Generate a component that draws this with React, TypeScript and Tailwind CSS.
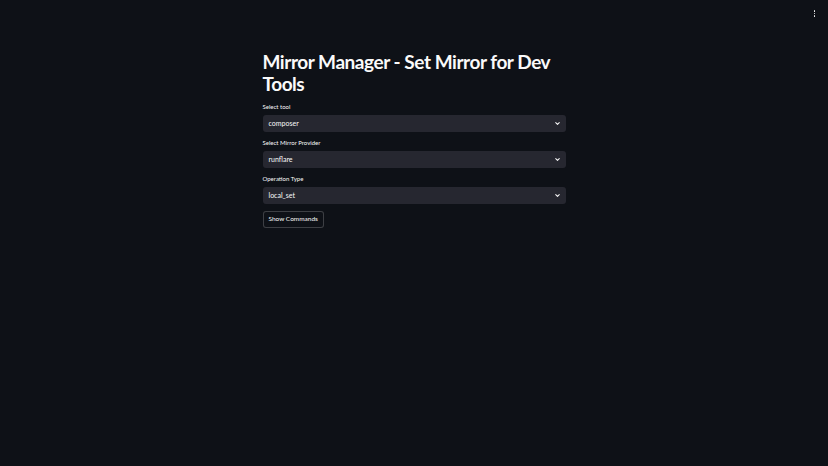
import { ChevronDown } from "lucide-react";

const fields = [
  { label: "Select tool", value: "composer" },
  { label: "Select Mirror Provider", value: "runflare" },
  { label: "Operation Type", value: "local_set" },
];

function Select({ label, value }: { label: string; value: string }) {
  return (
    <div className="flex flex-col gap-[4px]">
      <label className="text-[6px] leading-[8px] text-[#fafafa]">{label}</label>
      <div className="flex h-[17px] items-center justify-between rounded-[3px] bg-[#262730] pl-[6px] pr-[5px]">
        <span className="text-[7px] leading-none text-[#fafafa]">{value}</span>
        <ChevronDown className="h-[7px] w-[7px] text-[#fafafa]" strokeWidth={3.5} />
      </div>
    </div>
  );
}

export default function App() {
  return (
    <div className="relative min-h-screen bg-[#0e1117] font-['Lato',sans-serif] text-[#fafafa]">
      <div className="absolute right-[13px] top-[10px] flex flex-col gap-[1px]">
        <span className="h-[1.5px] w-[1.5px] rounded-full bg-[#fafafa]" />
        <span className="h-[1.5px] w-[1.5px] rounded-full bg-[#fafafa]" />
        <span className="h-[1.5px] w-[1.5px] rounded-full bg-[#fafafa]" />
      </div>

      <main className="mx-auto w-[303px] pt-[51px]">
        <h1 className="text-[19px] font-bold leading-[22px] tracking-[-0.45px]">
          Mirror Manager - Set Mirror for Dev Tools
        </h1>

        <div className="mt-[8px] flex flex-col gap-[7px]">
          {fields.map((f) => (
            <Select key={f.label} label={f.label} value={f.value} />
          ))}
          <div className="flex">
            <button className="h-[17px] rounded-[3px] border border-[#fafafa]/20 bg-[#0e1117] px-[5px] text-[6.5px] leading-none text-[#fafafa]">
              Show Commands
            </button>
          </div>
        </div>
      </main>
    </div>
  );
}
